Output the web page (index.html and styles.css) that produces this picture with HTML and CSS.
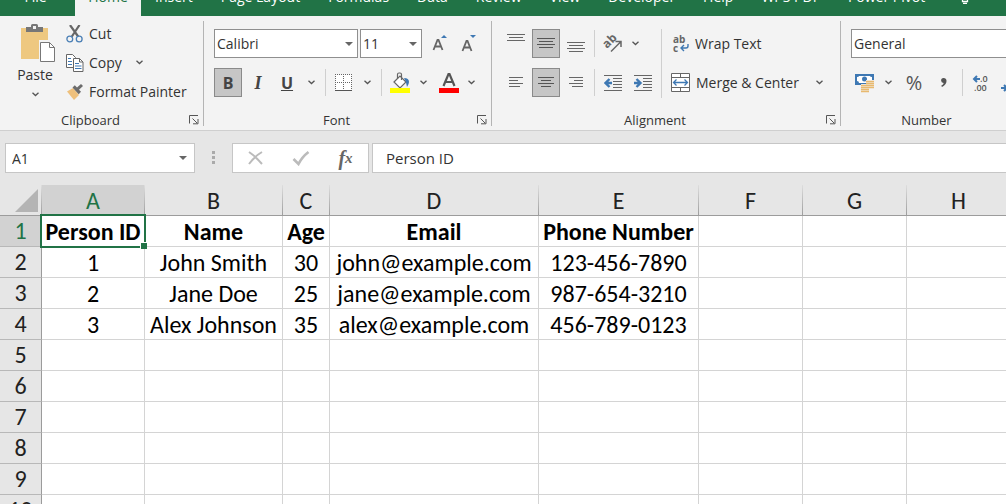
FILE: index.html
```html
<!DOCTYPE html>
<html lang="en">
<head>
<meta charset="utf-8">
<title>Spreadsheet</title>
<link rel="stylesheet" href="styles.css">
</head>
<body>
<svg class="defs" aria-hidden="true">
  <symbol id="chev" viewBox="0 0 7 5"><path d="M.5 .8 3.5 3.6 6.5 .8" fill="none" stroke="#555" stroke-width="1.3"/></symbol>
  <symbol id="launch" viewBox="0 0 10 10"><path d="M.5 8.500V.5H9M3.500 3.500 8 8M9 4V8.800H4" fill="none" stroke="#555"/></symbol>
</svg>
<div class="app">
  <nav class="tabs">
    <button class="tab file">File</button>
    <button class="tab active">Home</button>
    <button class="tab">Insert</button>
    <button class="tab">Page Layout</button>
    <button class="tab">Formulas</button>
    <button class="tab">Data</button>
    <button class="tab">Review</button>
    <button class="tab">View</button>
    <button class="tab">Developer</button>
    <button class="tab">Help</button>
    <button class="tab">WPS PDF</button>
    <button class="tab">Power Pivot</button>
    <button class="tab tell"><svg width="8" height="20" viewBox="0 0 8 20"><path d="M1.500 11C.5 9 .5 8 .5 6a3.500 3.500 0 0 1 7 0c0 2 0 3-1 5v6.500h-5zM1 12h6M1 15h6M2 19.500h4" fill="none" stroke="#fff" stroke-width="1.300"/></svg><span>Tell me</span></button>
  </nav>

  <div class="ribbon">
    <section class="group clipboard">
      <div class="body">
        <button class="paste">
          <svg width="36" height="40" viewBox="0 0 36 40"><path d="M1 5h27v31H1z" fill="#eec880"/><path d="M6 9V4h5V2.500Q11 1 12.500 1h4Q18 1 18 2.500V4h5v5z" fill="#777"/><path d="M13 3h3v3h-3z" fill="#f3f3f3"/><path d="M19 17h16v22H19z" fill="#f3f3f3"/><path d="M20.500 19.500h9l5 5v14h-14z" fill="#fff" stroke="#777"/><path d="M29.500 19.500v5h5" fill="none" stroke="#777"/></svg>
          <span>Paste</span>
          <svg width="7" height="5"><use href="#chev"/></svg>
        </button>
        <div class="stack">
          <button class="line"><svg width="18" height="18" viewBox="0 0 18 18"><path d="M4 0 12.500 12M13.500 0 5.500 12" stroke="#666" stroke-width="2.200"/><g fill="#f3f3f3" stroke="#4a7fb5" stroke-width="1.300"><circle cx="3.800" cy="14" r="2.900"/><circle cx="13.200" cy="14" r="2.900"/></g></svg>Cut</button>
          <button class="line"><svg width="18" height="18" viewBox="0 0 18 18"><g fill="#fff" stroke="#666"><path d="M.5.5h6l3 3v10h-9z"/><path d="M7.500 4.500h6l3.500 3.500v9.500H7.500z"/><path d="M13.500 4.500V8H17" fill="none"/></g><path d="M2 4.500h3M2 7.500h4M2 10.500h4M9 9.500h4M9 12h6.500M9 14.500h6.500" stroke="#3e78b3"/></svg>Copy<svg class="after" width="7" height="5"><use href="#chev"/></svg></button>
          <button class="line"><svg width="18" height="18" viewBox="0 0 18 18"><path d="M1 8.500 7 5l6 7-5 5z" fill="#eec07c"/><path d="m6.500 4.500 2.300-2.300L11 4.500 15 1l2 2-4 3.700 2 2-2.300 2.600z" fill="#6c6c6c"/></svg>Format Painter</button>
        </div>
      </div>
      <div class="caption"><span>Clipboard</span><button aria-label="Clipboard settings"><svg width="10" height="10"><use href="#launch"/></svg></button></div>
    </section>

    <section class="group font">
      <div class="body rows">
        <div class="row">
          <label class="combo family"><select aria-label="Font"><option>Calibri</option></select></label>
          <label class="combo size"><select aria-label="Font size"><option>11</option></select></label>
          <button class="tool grow" aria-label="Increase font size"><svg width="16" height="18" viewBox="0 0 16 18"><path d="m1.500 15 4-10h1l4 10M3.300 11.500h5.400" fill="none" stroke="#666" stroke-width="1.800"/><path d="M9 3 12 0l3 3z" fill="#3e78b3"/></svg></button>
          <button class="tool shrink" aria-label="Decrease font size"><svg width="16" height="18" viewBox="0 0 16 18"><path d="m1.500 16 4-10h1l4 10M3.300 12.500h5.400" fill="none" stroke="#666" stroke-width="1.800"/><path d="M9 0 12 3l3-3z" fill="#3e78b3"/></svg></button>
        </div>
        <div class="row">
          <button class="tool on glyph">B</button>
          <button class="tool glyph italic">I</button>
          <button class="tool glyph under">U</button>
          <button class="drop" aria-label="Underline options"><svg width="7" height="5"><use href="#chev"/></svg></button>
          <i class="sep"></i>
          <button class="tool" aria-label="Borders"><svg width="18" height="18" viewBox="0 0 18 18"><path d="M.5.500h16v16H.5z" fill="#fff"/><path d="M0 .5h17M0 8.500h17M.5 0v16M8.500 0v16M16.500 0v16" stroke="#666" stroke-dasharray="1 1"/><path d="M0 16.500h17" stroke="#555"/></svg></button>
          <button class="drop" aria-label="Border options"><svg width="7" height="5"><use href="#chev"/></svg></button>
          <i class="sep"></i>
          <button class="tool" aria-label="Fill color"><svg width="20" height="22" viewBox="0 0 20 22"><path d="m4 10 6-6 6 6-6 6z" fill="#fff" stroke="#666" stroke-width="1.200"/><path d="M7.500 7V2.500q0-1.500 1.500-1.500h1q1.500 0 1.500 1.500V8" fill="none" stroke="#666" stroke-width="1.200"/><path d="M14 6q5 0 5 4 0 2-2 5-.5-5-3-9" fill="#3e78b3"/><path d="M0 16h20v5H0z" fill="#ff0"/></svg></button>
          <button class="drop" aria-label="Fill options"><svg width="7" height="5"><use href="#chev"/></svg></button>
          <button class="tool color" aria-label="Font color"><svg width="20" height="22" viewBox="0 0 20 22"><path d="m4.500 14 5-12h1l5 12M6.500 10h7" fill="none" stroke="#555" stroke-width="2.200"/><path d="M0 16h20v5H0z" fill="red"/></svg></button>
          <button class="drop slim" aria-label="Font color options"><svg width="7" height="5"><use href="#chev"/></svg></button>
        </div>
      </div>
      <div class="caption"><span>Font</span><button aria-label="Font settings"><svg width="10" height="10"><use href="#launch"/></svg></button></div>
    </section>

    <section class="group alignment">
      <div class="body">
        <div class="rows">
          <div class="row spaced">
            <button class="tool" aria-label="Top align"><svg width="18" height="20" viewBox="0 0 18 20"><path d="M0 .5h18M2 3.500h14M0 6.500h18" stroke="#666"/></svg></button>
            <button class="tool on" aria-label="Middle align"><svg width="18" height="20" viewBox="0 0 18 20"><path d="M0 4.500h18M2 7.500h14M0 10.500h18M2 13.500h14" stroke="#555"/></svg></button>
            <button class="tool" aria-label="Bottom align"><svg width="18" height="20" viewBox="0 0 18 20"><path d="M0 8.500h18M2 11.500h14M0 14.500h18M2 17.500h14" stroke="#666"/></svg></button>
            <i class="sep"></i>
            <button class="tool" aria-label="Orientation"><svg width="20" height="20" viewBox="0 0 20 20"><text class="angled" x="4" y="15" transform="rotate(-45 4 15)">ab</text><path d="M8 17.500 17.500 8M12.500 7.500H18V13" fill="none" stroke="#666" stroke-width="1.500"/></svg></button>
            <button class="drop slim" aria-label="Orientation options"><svg width="7" height="5"><use href="#chev"/></svg></button>
          </div>
          <div class="row spaced">
            <button class="tool" aria-label="Align left"><svg width="14" height="14" viewBox="0 0 14 14"><path d="M0 1.500h14M0 4.500h9M0 7.500h14M0 10.500h11" stroke="#666"/></svg></button>
            <button class="tool on" aria-label="Center"><svg width="16" height="14" viewBox="0 0 16 14"><path d="M0 1.500h16M3 4.500h10M0 7.500h16M3 10.500h10" stroke="#555"/></svg></button>
            <button class="tool" aria-label="Align right"><svg width="14" height="14" viewBox="0 0 14 14"><path d="M0 1.500h14M5 4.500h9M0 7.500h14M3 10.500h11" stroke="#666"/></svg></button>
            <i class="sep"></i>
            <button class="tool" aria-label="Decrease indent"><svg width="18" height="18" viewBox="0 0 18 18"><path d="M0 1.500h18M9 4.500h9M9 7.500h9M9 10.500h9M9 13.500h9M0 16.500h18" stroke="#666"/><path d="M8 9H2M5.500 5 1.500 9l4 4" fill="none" stroke="#3e78b3" stroke-width="2.400"/></svg></button>
            <button class="tool" aria-label="Increase indent"><svg width="18" height="18" viewBox="0 0 18 18"><path d="M0 1.500h18M9 4.500h9M9 7.500h9M9 10.500h9M9 13.500h9M0 16.500h18" stroke="#666"/><path d="M0 9h6M2.500 5l4 4-4 4" fill="none" stroke="#3e78b3" stroke-width="2.400"/></svg></button>
          </div>
        </div>
        <i class="sep tall"></i>
        <div class="rows wide">
          <button class="text"><svg width="18" height="18" viewBox="0 0 18 18"><text class="tiny" x="2" y="8">ab</text><text class="tiny" x="2" y="17">c</text><path d="M17 9v2q0 2-2 2h-4.500M13 10l-3 3 3 3" fill="none" stroke="#3e78b3" stroke-width="1.400"/></svg>Wrap Text</button>
          <button class="text"><svg width="19" height="19" viewBox="0 0 19 19"><path d="M.5.5h18v18H.5zM.5 4.500h18M.5 14.500h18M9.500.500v4M9.500 14.500v4" fill="#fff" stroke="#666"/><path d="M3 9.500h13M5.500 6.500l-3 3 3 3M13.500 6.500l3 3-3 3" fill="none" stroke="#3e78b3" stroke-width="1.300"/></svg>Merge &amp; Center<svg class="end" width="7" height="5"><use href="#chev"/></svg></button>
        </div>
      </div>
      <div class="caption"><span>Alignment</span><button aria-label="Alignment settings"><svg width="10" height="10"><use href="#launch"/></svg></button></div>
    </section>

    <section class="group number">
      <div class="body rows">
        <div class="row"><label class="combo format"><select aria-label="Number format"><option>General</option></select></label></div>
        <div class="row">
          <button class="tool" aria-label="Accounting format"><svg width="20" height="20" viewBox="0 0 20 20"><path d="M0 1h19v11H0z" fill="#3e78b3"/><path d="M2 4q2 0 2-1h11q0 1 2 1v4q-2 0-2 2H4q0-2-2-2z" fill="#fff"/><circle cx="9.500" cy="6" r="2.500" fill="#3e78b3"/><path d="M11 7h8v9h-4v4H6v-9h5z" fill="#f3f3f3"/><path d="M11 8.500h8M11 10.500h8M11 12.500h8M11 14.500h8M6 12.500h8M6 14.500h8M6 16.500h8M6 18.500h8" stroke="#e8b96f" stroke-width="1.400"/></svg></button>
          <button class="drop" aria-label="Accounting options"><svg width="7" height="5"><use href="#chev"/></svg></button>
          <button class="tool sign">%</button>
          <button class="tool comma" aria-label="Comma style"><svg width="8" height="12" viewBox="0 0 8 12"><path d="M3.500 1A2.800 2.800 0 0 1 6.500 4Q6.500 7.500 2 10L1.200 8.700Q3.500 7.500 3.700 6A2.500 2.500 0 0 1 3.500 1" fill="#555"/></svg></button>
          <i class="sep"></i>
          <button class="tool" aria-label="Increase decimal"><svg width="18" height="20" viewBox="0 0 18 20"><path d="M8 6H3M5 3 2 6l3 3" fill="none" stroke="#3e78b3" stroke-width="2"/><text class="digits" x="8" y="9">.0</text><text class="digits" x="2" y="18">.00</text></svg></button>
          <button class="tool" aria-label="Decrease decimal"><svg width="18" height="20" viewBox="0 0 18 20"><path d="M1 15h5M4 12l3 3-3 3" fill="none" stroke="#3e78b3" stroke-width="2"/></svg></button>
        </div>
      </div>
      <div class="caption"><span>Number</span><button aria-label="Number settings"><svg width="10" height="10"><use href="#launch"/></svg></button></div>
    </section>
  </div>

  <div class="formula">
    <label class="namebox"><input aria-label="Name box" value="A1"></label>
    <i class="dots"></i>
    <div class="actions">
      <button aria-label="Cancel"><svg width="18" height="16" viewBox="0 0 18 16"><path d="M2 2q6 4 13 12M15 2Q8 6 2 14" fill="none" stroke="#bbb" stroke-width="2"/></svg></button>
      <button aria-label="Enter"><svg width="18" height="16" viewBox="0 0 18 16"><path d="m1.500 9 5 5Q10 7 16.500 2" fill="none" stroke="#bbb" stroke-width="2.600"/></svg></button>
      <button class="fx" aria-label="Insert function"><span>f</span><small>x</small></button>
    </div>
    <input class="value" aria-label="Formula bar" value="Person ID">
  </div>

  <table class="sheet">
    <colgroup><col class="c0"><col class="ca"><col class="cb"><col class="cc"><col class="cd"><col class="ce"><col class="cf"><col class="cf"><col></colgroup>
    <thead><tr><th class="corner"><svg width="23" height="23" viewBox="0 0 23 23"><path d="M23 0v23H0z" fill="#b4b4b4"/></svg></th><th class="sel">A</th><th>B</th><th>C</th><th>D</th><th>E</th><th>F</th><th>G</th><th>H</th></tr></thead>
    <tbody>
      <tr class="bold"><th class="sel">1</th><td class="cursor">Person ID</td><td>Name</td><td>Age</td><td>Email</td><td>Phone Number</td><td></td><td></td><td></td></tr>
      <tr><th>2</th><td>1</td><td>John Smith</td><td>30</td><td>john@example.com</td><td>123-456-7890</td><td></td><td></td><td></td></tr>
      <tr><th>3</th><td>2</td><td>Jane Doe</td><td>25</td><td>jane@example.com</td><td>987-654-3210</td><td></td><td></td><td></td></tr>
      <tr><th>4</th><td>3</td><td>Alex Johnson</td><td>35</td><td>alex@example.com</td><td>456-789-0123</td><td></td><td></td><td></td></tr>
      <tr><th>5</th><td></td><td></td><td></td><td></td><td></td><td></td><td></td><td></td></tr>
      <tr><th>6</th><td></td><td></td><td></td><td></td><td></td><td></td><td></td><td></td></tr>
      <tr><th>7</th><td></td><td></td><td></td><td></td><td></td><td></td><td></td><td></td></tr>
      <tr><th>8</th><td></td><td></td><td></td><td></td><td></td><td></td><td></td><td></td></tr>
      <tr><th>9</th><td></td><td></td><td></td><td></td><td></td><td></td><td></td><td></td></tr>
      <tr><th>10</th><td></td><td></td><td></td><td></td><td></td><td></td><td></td><td></td></tr>
    </tbody>
  </table>
</div>
</body>
</html>
```

FILE: styles.css
```css
* { box-sizing: border-box; }
body {
  margin: 0;
  font: 14px/20px "Open Sans", "Noto Sans", sans-serif;
  color: #333;
  background: #fff;
}
button, input, select { font: inherit; color: inherit; }
button { border: 0; padding: 0; background: none; }
svg { display: block; flex: none; }
.defs { display: none; }
.app { height: 100vh; overflow: hidden; }

/* Tab strip */
.tabs {
  display: flex;
  align-items: flex-end;
  height: 16px;
  overflow: hidden;
  background: #217346;
}
.tab {
  flex: none;
  height: 32px;
  padding: 0 14px 6px;
  color: #fff;
  white-space: nowrap;
}
.tab.file { width: 75px; padding-right: 18px; }
.tab.active { width: 66px; padding-left: 12px; padding-right: 12px; color: #217346; background: #f3f3f3; }
.tell { display: flex; gap: 22px; padding-left: 22px; }

/* Ribbon */
.ribbon {
  display: flex;
  height: 115px;
  overflow: hidden;
  background: #f3f3f3;
  border-bottom: 1px solid #cfcfcf;
}
.group {
  flex: none;
  display: flex;
  flex-direction: column;
  justify-content: space-between;
  margin: 5px 0 4px;
  border-right: 1px solid #b4b4b4;
}
.clipboard { width: 204px; }
.font { width: 288px; }
.alignment { width: 349px; }
.number { width: 194px; }
.body { display: flex; padding: 8px 0 0 10px; }
.rows { display: flex; flex-direction: column; gap: 10px; }
.row { display: flex; height: 29px; align-items: center; }
.spaced { gap: 2px; }
.caption { display: flex; align-items: center; height: 12px; font-size: 13px; }
.caption span { flex: 1; text-align: center; }
.caption button { width: 22px; padding-left: 8px; }
.clipboard .body { align-items: flex-start; padding: 2px 0 0 14px; }
.paste {
  display: flex;
  flex-direction: column;
  align-items: center;
  width: 42px;
}
.paste > svg:first-child { margin-left: 6px; }
.paste span { margin: 2px 0 7px; }
.stack { margin-top: -4px; padding-left: 10px; }
.line {
  display: flex;
  align-items: center;
  gap: 5px;
  height: 29px;
  white-space: nowrap;
}
.after { margin-left: 9px; }

.tool, .drop {
  flex: none;
  display: flex;
  align-items: center;
  justify-content: center;
  width: 28px;
  height: 29px;
}
.drop { width: 19px; }
.slim { width: 12px; }
.grow, .color { width: 32px; }
.shrink { width: 26px; }
.on { background: #c6c6c6; border: 1px solid #8a8a8a; }
.glyph { color: #444; font-size: 16px; font-weight: 700; }
.italic { margin-left: 2px; font-family: "Liberation Serif", serif; font-style: italic; font-size: 18px; }
.under { width: 30px; text-decoration: underline; }
.sep { flex: none; width: 1px; height: 27px; margin: 0 4px; background: #cfcfcf; }
.spaced .sep { margin: 0 2px; }
.tall { height: 69px; margin: 0 4px; }
.tiny { font: 700 10px "Open Sans", sans-serif; fill: #666; }
.angled { font: 700 12px "Open Sans", sans-serif; fill: #666; }
.digits { font: 600 9px "Open Sans", sans-serif; fill: #555; }
.sign { width: 32px; font-size: 20px; color: #555; }

.combo { position: relative; display: block; height: 29px; }
.combo select {
  width: 100%;
  height: 100%;
  padding: 0 2px;
  border: 1px solid #8f8f8f;
  border-radius: 0;
  background: #fff;
  appearance: none;
}
.combo::after, .namebox::after {
  content: "";
  position: absolute;
  top: 13px;
  right: 5px;
  border: 4px solid transparent;
  border-top-color: #666;
  border-bottom: 0;
}
.namebox::after { right: 8px; }
.family { width: 144px; margin-right: 2px; }
.size { width: 62px; margin-right: 2px; }
.format { width: 174px; }

.wide { flex: 1; }
.text {
  display: flex;
  align-items: center;
  gap: 6px;
  height: 29px;
  padding: 0 17px 0 5px;
}
.end { margin-left: auto; }

/* Formula bar */
.formula {
  display: flex;
  height: 54px;
  padding: 12px 0;
  background: #e6e6e6;
}
.namebox { position: relative; width: 190px; margin-left: 5px; }
.formula input, .actions {
  width: 100%;
  height: 30px;
  border: 1px solid #c6c6c6;
  border-radius: 0;
  background: #fff;
}
.formula input { padding: 0 6px; }
.formula .value { flex: 1; width: auto; min-width: 0; padding: 0 13px; border-right: 0; font-size: 15px; }
.dots { width: 3px; height: 13px; margin: 8px 17px; background: repeating-linear-gradient(#aaa 0 3px, transparent 3px 5px); }
.formula .actions { display: flex; flex: none; align-items: center; width: 137px; margin-right: 3px; }
.actions button { display: flex; flex: 1; justify-content: center; }
.fx { font: italic 700 20px/20px "Liberation Serif", serif; color: #666; }
.fx small { font-size: 15px; }

/* Grid */
.sheet {
  width: 100%;
  min-width: 1011px;
  table-layout: fixed;
  border-collapse: separate;
  border-spacing: 0;
  color: #000;
  font: 24px/28px Carlito, Lato, sans-serif;
}
.c0 { width: 42px; }
.ca { width: 103px; }
.cb { width: 138px; }
.cc { width: 47px; }
.cd { width: 209px; }
.ce { width: 160px; }
.cf { width: 104px; }
.sheet th, .sheet td {
  height: 31px;
  padding: 2px 0 0;
  text-align: center;
  white-space: nowrap;
  border-right: 1px solid #d4d4d4;
  border-bottom: 1px solid #d4d4d4;
}
.sheet th {
  color: #222;
  font-weight: 400;
  background: #e6e6e6;
  border-color: #9b9b9b;
}
.sheet thead th { border-right: 1px solid; border-image: linear-gradient(#e0e0e0, #9b9b9b) 1; border-top: 0; border-left: 0; border-bottom: 1px solid; }
.sheet tbody th { padding: 0; border-bottom-color: #b8b8b8; }
.sheet .sel { color: #217346; background: #d2d2d2; }
.corner svg { margin: 2px 0 3px 15px; }
.bold { font-weight: 700; }
.cursor { position: relative; }
.cursor::before {
  content: "";
  position: absolute;
  inset: -2px -2px -2px -2px;
  border: 2px solid #217346;
}
.cursor::after {
  content: "";
  position: absolute;
  right: -3px;
  bottom: -3px;
  width: 6px;
  height: 6px;
  background: #217346;
  border: solid #fff;
  border-width: 1px 0 0 1px;
}
```
